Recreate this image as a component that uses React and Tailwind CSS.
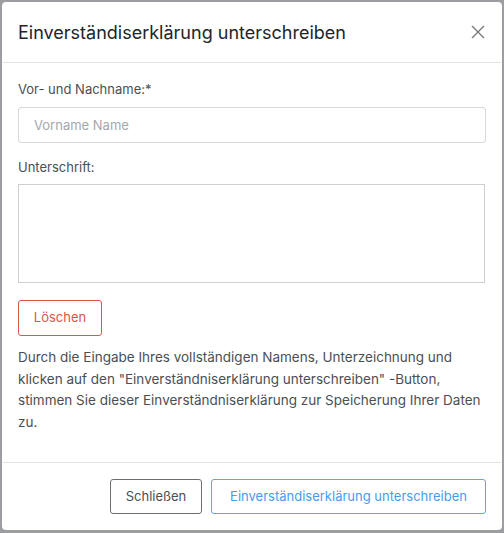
export default function App() {
  return (
    <div className="h-[533px] w-[504px] bg-[#9c9da1] p-[2px] font-['Inter',sans-serif]">
      <div className="flex h-[528px] w-[500px] flex-col rounded-[4px] bg-white">
        {/* Header */}
        <div className="flex h-[61px] items-center justify-between border-b border-[#e5e5e5] pl-[16px] pr-[16px]">
          <h2 className="text-[18px] font-normal text-[#212529]">Einverständiserklärung unterschreiben</h2>
          <button className="text-[#7a7a7a]">
            <svg width="16" height="16" viewBox="0 0 16 16" fill="none" stroke="currentColor" strokeWidth="1.4">
              <path d="M2 2L14 14M14 2L2 14" />
            </svg>
          </button>
        </div>

        {/* Body */}
        <div className="flex-1 px-[16px] pt-[17px] text-[#4a4f55]">
          <label className="block text-[13px] leading-[18px]">Vor- und Nachname:*</label>
          <input
            placeholder="Vorname Name"
            className="mt-[9px] h-[36px] w-full rounded-[3px] border border-[#d5d8dc] px-[15px] text-[13px] placeholder:text-[#a3a8ae] outline-none"
          />
          <label className="mt-[15px] block text-[13px] leading-[18px]">Unterschrift:</label>
          <div className="mt-[8px] h-[99px] w-[467px] border border-[#cfcfcf]"></div>
          <button className="mt-[17px] h-[36px] w-[84px] rounded-[3px] border border-[#d9574a] text-[13px] text-[#d9574a]">
            Löschen
          </button>
          <p className="mt-[11px] text-[13.5px] leading-[21.5px] text-[#4a4f55]">
            Durch die Eingabe Ihres vollständigen Namens, Unterzeichnung und klicken auf den "Einverständniserklärung unterschreiben" -Button, stimmen Sie dieser Einverständniserklärung zur Speicherung Ihrer Daten zu.
          </p>
        </div>

        {/* Footer */}
        <div className="flex h-[68px] items-center justify-end gap-[9px] border-t border-[#e5e5e5] px-[16px]">
          <button className="h-[35px] w-[92px] rounded-[3px] border border-[#6b6f74] text-[13px] text-[#4a4f55]">
            Schließen
          </button>
          <button className="h-[35px] w-[275px] rounded-[3px] border border-[#5ea5f2] text-[13px] text-[#4a9af0]">
            Einverständiserklärung unterschreiben
          </button>
        </div>
      </div>
    </div>
  );
}
